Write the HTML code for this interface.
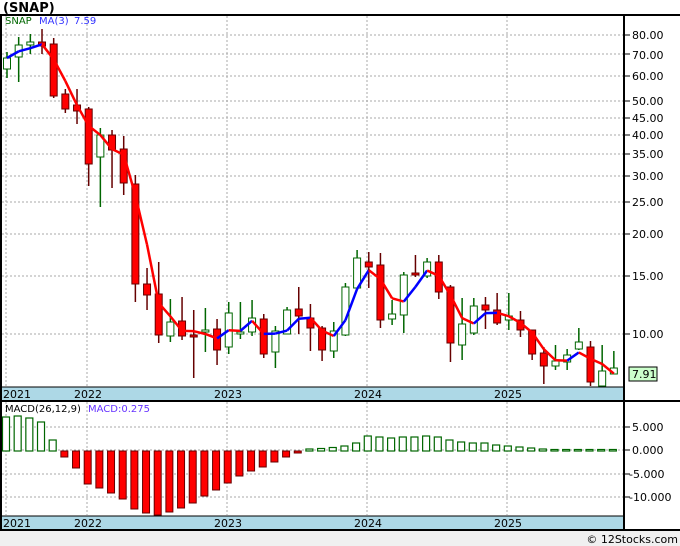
<!DOCTYPE html>
<html><head><meta charset="utf-8"><style>
html,body{margin:0;padding:0;background:#fff;}
body{width:680px;height:546px;overflow:hidden;position:relative;font-family:"DejaVu Sans","Liberation Sans",sans-serif;}
svg{position:absolute;left:0;top:0;}
</style></head><body>
<svg id="s" width="680" height="546" viewBox="0 0 680 546" xmlns="http://www.w3.org/2000/svg" font-family="DejaVu Sans, Liberation Sans, sans-serif">
<rect x="0" y="531" width="680" height="15" fill="#f0f0f0"/>
<text x="3" y="12" font-size="13" font-weight="bold" fill="#000">(SNAP)</text>
<rect x="0" y="387" width="624" height="14" fill="#add8e6"/>
<rect x="0" y="516" width="624" height="14" fill="#add8e6"/>
<g id="grid" stroke="#aaa" stroke-dasharray="2,2" stroke-width="1"></g>
<g id="cd"></g>
<g id="ma" fill="none" stroke-width="2.5"></g>
<g id="mc"></g>
<g stroke="#000" stroke-width="2" fill="none">
<line x1="0" y1="15" x2="680" y2="15"/>
<line x1="1" y1="15" x2="1" y2="530"/>
<line x1="624" y1="15" x2="624" y2="530"/>
<line x1="0" y1="401" x2="680" y2="401"/>
<line x1="0" y1="530" x2="680" y2="530"/>
<line x1="0" y1="387" x2="624" y2="387" stroke-width="1"/>
<line x1="0" y1="516" x2="624" y2="516" stroke-width="1"/>
</g>
<g id="ticks" stroke="#000" stroke-width="1"></g>
<g font-size="11" fill="#000">
<text x="632" y="39">80.00</text><text x="632" y="59">70.00</text><text x="632" y="80">60.00</text>
<text x="632" y="105">50.00</text><text x="632" y="122">45.00</text><text x="632" y="139">40.00</text>
<text x="632" y="158">35.00</text><text x="632" y="180">30.00</text><text x="632" y="206">25.00</text>
<text x="632" y="238">20.00</text><text x="632" y="280">15.00</text><text x="632" y="338">10.00</text>
<text x="632" y="431">5.000</text><text x="632" y="454">0.000</text><text x="629" y="478">-5.000</text><text x="629" y="501">-10.000</text>
<text x="3" y="398">2021</text><text x="74" y="398">2022</text><text x="214" y="398">2023</text><text x="354" y="398">2024</text><text x="494" y="398">2025</text>
<text x="3" y="527">2021</text><text x="74" y="527">2022</text><text x="214" y="527">2023</text><text x="354" y="527">2024</text><text x="494" y="527">2025</text>
</g>
<rect x="629" y="367" width="28" height="14" fill="#ccffcc" stroke="#000" stroke-width="1"/>
<text x="632" y="378" font-size="11" fill="#000">7.91</text>
<text x="5" y="24" font-size="10" fill="#006600">SNAP</text>
<text x="39" y="24" font-size="10" fill="#3333ff">MA(3)</text>
<text x="74" y="24" font-size="10" fill="#3333ff">7.59</text>
<text x="5" y="412" font-size="10" fill="#000">MACD(26,12,9)</text>
<text x="88" y="412" font-size="10" fill="#6633ff">MACD:0.275</text>
<text x="678" y="543" font-size="11" fill="#000" text-anchor="end">© 12Stocks.com</text>
</svg>
<script>
var NS="http://www.w3.org/2000/svg";
function el(p,t,a){var e=document.createElementNS(NS,t);for(var k in a)e.setAttribute(k,a[k]);document.getElementById(p).appendChild(e);return e;}
var hy=[35,54,76,101,118,135,154,176,202,234,276,334];
hy.forEach(function(y){el("grid","line",{x1:2,y1:y,x2:624,y2:y});el("ticks","line",{x1:624,y1:y,x2:630,y2:y});});
[427,450,474,497].forEach(function(y){el("grid","line",{x1:2,y1:y,x2:624,y2:y});el("ticks","line",{x1:624,y1:y,x2:630,y2:y});});
[6,87,227,367,507].forEach(function(x){el("grid","line",{x1:x,y1:16,x2:x,y2:386});el("grid","line",{x1:x,y1:402,x2:x,y2:515});});
var D=[[52,58,69,78,1],[37,45,57,82,1],[34,42,45,54,1],[29,42,46,54,0],[38,44,96,98,0],[89,94,109,113,0],[89,105,111,124,0],[107,109,164,186,0],[128,135,157,207,1],[130,135,150,188,0],[136,149,183,195,0],[175,184,284,302,0],[268,284,295,310,0],[262,294,335,343,0],[299,322,336,342,1],[297,321,336,340,0],[310,335,336,378,0],[308,330,331,352,1],[319,329,350,365,0],[302,313,347,354,1],[302,332,334,339,1],[300,318,332,336,1],[314,319,354,358,0],[326,331,352,368,1],[307,310,334,334,1],[287,309,316,334,0],[304,318,328,351,0],[326,328,350,361,0],[322,331,351,358,1],[283,287,335,336,1],[250,258,288,290,1],[252,262,267,288,0],[253,265,320,328,0],[300,314,319,325,1],[272,275,315,333,1],[255,273,275,277,0],[258,262,276,278,1],[255,262,292,299,0],[285,287,343,362,0],[298,324,345,360,1],[298,306,333,335,1],[297,305,310,329,0],[293,310,323,325,0],[293,316,320,330,1],[311,320,330,337,0],[330,330,354,360,0],[347,353,366,384,0],[345,361,366,370,1],[349,355,362,370,1],[328,342,349,350,1],[341,347,382,386,0],[345,371,386,387,1],[351,368,374,374,1]];
var cl=[];
D.forEach(function(d,i){var x=7+11.67*i;var g=d[4];var sc=g?"#006600":"#660000";
el("cd","line",{x1:x,y1:d[0],x2:x,y2:d[3],stroke:sc,"stroke-width":1.5});
var h=Math.max(d[2]-d[1],2);
el("cd","rect",{x:x-3.5,y:d[1],width:7,height:h,fill:g?"#fff":"#ff0000",stroke:sc,"stroke-width":1});
cl.push(g?d[1]:d[2]);});
function p(y){return Math.pow(10,(334-y)/331);}function yy(v){return 334-331*Math.log10(v);}
var ma=[];for(var i=0;i<cl.length;i++){var a=cl.slice(Math.max(0,i-2),i+1).map(p);ma.push(yy(a.reduce(function(s,v){return s+v;},0)/a.length));}
for(var i=0;i<ma.length-1;i++){var x1=7+11.67*i,x2=x1+11.67;el("ma","line",{x1:x1,y1:ma[i],x2:x2,y2:ma[i+1],stroke:ma[i+1]<ma[i]?"#0000ff":"#ff0000","stroke-width":2.5});}
var M=[417,416,418,422,440,457,468,484,488,493,499,509,513,515,512,508,503,496,490,483,476,471,467,462,457,453,449,448.5,447.5,446,443,436,437,438,437,437,436,437,440,442,443,443,445,446,447,448,449,449.5,449.5,449.5,449.5,449.5,449.5];
var z=451;
M.forEach(function(t,i){var x=6+11.67*i;
if(t<z){var g=z-t;el("mc","rect",{x:x-3.5,y:t,width:7,height:Math.max(g,1.5),fill:"#fff",stroke:"#006600","stroke-width":1.2});}
else{el("mc","rect",{x:x-3.5,y:z,width:7,height:Math.max(t-z,1.5),fill:"#ff0000",stroke:"#660000","stroke-width":1});}});
</script>
</body></html>
